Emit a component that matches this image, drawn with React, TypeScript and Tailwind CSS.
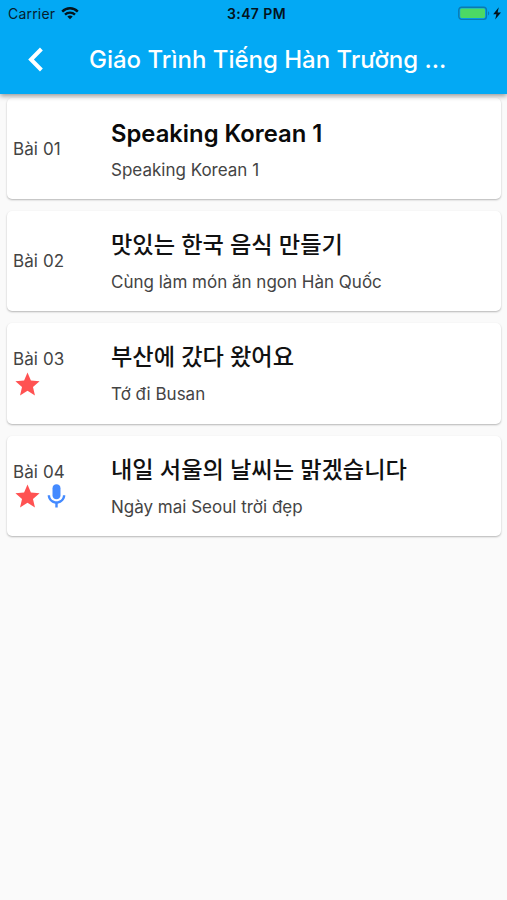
import { MdStar } from "react-icons/md";

type Lesson = {
    id: number;
    label: string;
    title: string;
    subtitle: string;
    starred?: boolean;
    recorded?: boolean;
    korean?: boolean;
};

const lessons: Lesson[] = [
    { id: 1, label: "Bài 01", title: "Speaking Korean 1", subtitle: "Speaking Korean 1" },
    { id: 2, label: "Bài 02", title: "맛있는 한국 음식 만들기", subtitle: "Cùng làm món ăn ngon Hàn Quốc", korean: true },
    { id: 3, label: "Bài 03", title: "부산에 갔다 왔어요", subtitle: "Tớ đi Busan", starred: true, korean: true },
    {
        id: 4,
        label: "Bài 04",
        title: "내일 서울의 날씨는 맑겠습니다",
        subtitle: "Ngày mai Seoul trời đẹp",
        starred: true,
        recorded: true,
        korean: true,
    },
];

function WifiIcon() {
    return (
        <svg width="18" height="13" viewBox="0 0 18 13" fill="none" stroke="#04141d" strokeWidth="2.4">
            <path d="M1.2 4.6C5.6.2 12.4.2 16.8 4.6" />
            <path d="M4 7.6c2.8-2.7 7.2-2.7 10 0" />
            <path d="M6.3 9.6c1.5-1.4 3.9-1.4 5.4 0L9 12.3z" fill="#04141d" stroke="none" />
        </svg>
    );
}

function BatteryIcon() {
    return (
        <svg width="44" height="15" viewBox="0 0 44 15" fill="none">
            <rect x=".8" y="1.2" width="27.6" height="12.2" rx="2.8" stroke="#0c7ab0" strokeWidth="1.4" />
            <rect x="2.2" y="2.6" width="24.8" height="9.4" rx="1.4" fill="#4cd964" />
            <path d="M30 5.2c1.7.6 1.7 3.6 0 4.2z" fill="#0c7ab0" />
            <path d="M40.8 1.2 35.2 8.2h3.2l-1.2 5.4 5.8-7.2h-3.4z" fill="#04141d" />
        </svg>
    );
}

function MicIcon() {
    return (
        <svg width="29" height="29" viewBox="0 0 24 24" fill="#448aff">
            <path d="M12 14.3c1.8 0 3.3-1.4 3.3-3.2V5.1C15.3 3.3 13.8 1.9 12 1.9S8.700 3.300 8.700 5.100v6c0 1.800 1.500 3.200 3.300 3.200z" />
            <path d="M17.300 11c0 3-2.500 5-5.300 5s-5.300-2-5.300-5H4.700c0 3.500 2.800 6.400 6.300 6.900V21h2v-3.100c3.500-.5 6.300-3.400 6.300-6.900z" />
        </svg>
    );
}

function StatusBar() {
    return (
        <div className="grid h-[27px] grid-cols-3 items-center pl-[8px] pr-[5px] text-[14px] text-[#06202e]">
            <div className="flex items-center gap-[6px]">
                <span className="tracking-[0.2px]">Carrier</span>
                <WifiIcon />
            </div>
            <span className="pl-[3px] text-center text-[14px] font-semibold tracking-[0.4px] text-[#04141d]">
                3:47 PM
            </span>
            <div className="flex justify-end">
                <BatteryIcon />
            </div>
        </div>
    );
}

function AppBar() {
    return (
        <header className="relative z-10 h-[94px] bg-[#03a9f4] shadow-[0_2px_5px_rgba(0,0,0,0.4)]">
            <StatusBar />
            <div className="flex h-[66px] items-center">
                <button type="button" aria-label="Back" className="mb-[1px] ml-[27px] mr-[45px]">
                    <svg width="17" height="25" viewBox="0 0 17 25" fill="none" stroke="white" strokeWidth="4">
                        <path d="M14.4 2 4 12.5 14.4 23" />
                    </svg>
                </button>
                <h1 className="whitespace-nowrap text-[24px] font-medium text-white">
                    Giáo Trình Tiếng Hàn Trường ...
                </h1>
            </div>
        </header>
    );
}

function LessonCard({ lesson }: { lesson: Lesson }) {
    return (
        <li className="flex h-[100.4px] items-center rounded-[5px] bg-white pl-[6px] shadow-[0_1px_2px_rgba(0,0,0,0.28)]">
            <div className="w-[98px] text-[17px] leading-[24px] tracking-[0.1px] text-[#444]">
                <p>{lesson.label}</p>
                {lesson.starred && (
                    <div className="flex h-7 items-center pb-[2px]">
                        <MdStar size={29} color="#ff5252" />
                        {lesson.recorded && <MicIcon />}
                    </div>
                )}
            </div>
            <div className="pt-[1px]">
                <h2
                    className={
                        lesson.korean
                            ? "h-[41px] text-[23.2px] font-medium leading-[32px] text-[#111]"
                            : "h-[41px] text-[23.8px] font-semibold leading-[34px] text-[#0a0a0a]"
                    }
                >
                    {lesson.title}
                </h2>
                <p className="text-[17px] leading-[24px] text-[#444]">{lesson.subtitle}</p>
            </div>
        </li>
    );
}

function App() {
    return (
        <div className="min-h-screen bg-[#fafafa] font-['Inter','Noto_Sans_CJK_KR',sans-serif]">
            <AppBar />
            <ul className="flex flex-col gap-3 pl-[7px] pr-[6px] pt-[4.4px]">
                {lessons.map((lesson) => (
                    <LessonCard key={lesson.id} lesson={lesson} />
                ))}
            </ul>
        </div>
    );
}

export default App;
